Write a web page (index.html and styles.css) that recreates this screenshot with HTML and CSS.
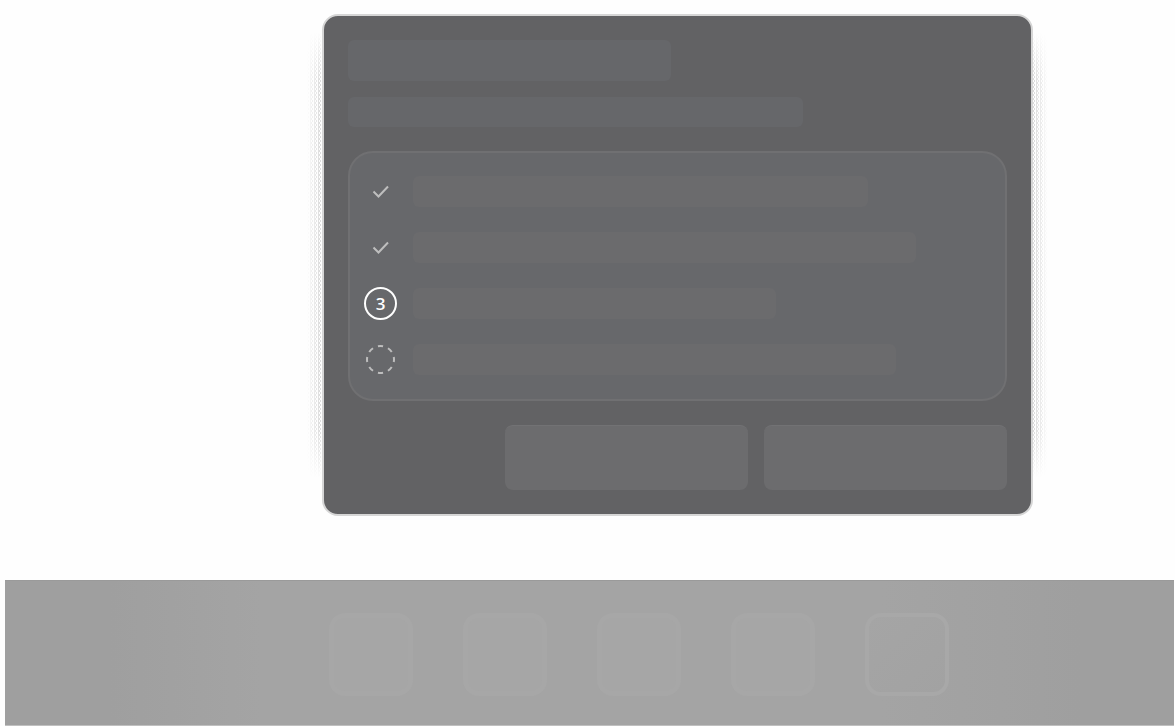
FILE: index.html
```html
<!DOCTYPE html>
<html lang="en">
<head>
<meta charset="utf-8">
<meta name="viewport" content="width=device-width, initial-scale=1">
<title>Setup steps</title>
<link rel="stylesheet" href="styles.css">
</head>
<body>
<main class="stage">
  <section class="card">
    <div class="bar bar-title"></div>
    <div class="bar bar-subtitle"></div>
    <ol class="steps">
      <li class="step">
        <svg class="mark" viewBox="0 0 33 33" aria-label="Done"><path d="M9.5 16.5l5 5L24 11.500" fill="none" stroke="#bebebe" stroke-width="2"/></svg>
        <span class="line line-1"></span>
      </li>
      <li class="step">
        <svg class="mark" viewBox="0 0 33 33" aria-label="Done"><path d="M9.500 16.500l5 5L24 11.500" fill="none" stroke="#bebebe" stroke-width="2"/></svg>
        <span class="line line-2"></span>
      </li>
      <li class="step">
        <span class="mark number">3</span>
        <span class="line line-3"></span>
      </li>
      <li class="step">
        <svg class="mark" viewBox="0 0 33 33" aria-label="Pending"><circle cx="16.500" cy="16.500" r="13.500" fill="none" stroke="#bebebe" stroke-width="2" pathLength="80" stroke-dasharray="5 5" stroke-dashoffset="2.500"/></svg>
        <span class="line line-4"></span>
      </li>
    </ol>
    <div class="actions">
      <button class="action" type="button" aria-label="Back"></button>
      <button class="action" type="button" aria-label="Next"></button>
    </div>
  </section>
</main>
<nav class="dock" aria-label="Dock">
  <button class="tile" type="button" aria-label="App 1"></button>
  <button class="tile" type="button" aria-label="App 2"></button>
  <button class="tile" type="button" aria-label="App 3"></button>
  <button class="tile" type="button" aria-label="App 4"></button>
  <button class="tile tile-outline" type="button" aria-label="App 5"></button>
</nav>
</body>
</html>
```
FILE: styles.css
```css
* {
  box-sizing: border-box;
}

body {
  margin: 0;
  background: #fefefe;
  font-family: "Open Sans", "Noto Sans", sans-serif;
}

.stage {
  padding: 14px 142px 64px 322px;
}

.card {
  position: relative;
  padding: 24px;
  border: 2px solid #d6d6d6;
  border-radius: 16px;
  background: #626264;
}

/* Stippled shade along both sides of the card */
.card::before,
.card::after {
  content: "";
  position: absolute;
  top: 16px;
  bottom: 36px;
  width: 15px;
  background:
    conic-gradient(#d8d8d8 25%, transparent 0) 0 0 / 2px 4px,
    conic-gradient(#d8d8d8 25%, transparent 0) 1px 2px / 4px 4px;
  mask:
    linear-gradient(transparent, #000 48px, #000 calc(100% - 48px), transparent),
    linear-gradient(var(--fade), #000, transparent);
  mask-composite: intersect;
}

.card::before {
  --fade: to left;
  right: 100%;
  margin-right: 2px;
}

.card::after {
  --fade: to right;
  left: 100%;
  margin-left: 2px;
}

.bar {
  border-radius: 6px;
  background: #66676a;
}

.bar-title {
  width: 49%;
  height: 41px;
  margin-bottom: 16px;
}

.bar-subtitle {
  width: 69%;
  height: 30px;
  margin-bottom: 24px;
}

.steps {
  display: grid;
  gap: 23px;
  margin: 0 0 24px;
  padding: 22px 14px 23px;
  border: 2px solid #707072;
  border-radius: 25px;
  background: #67686b;
  list-style: none;
}

.step {
  display: flex;
  align-items: center;
  gap: 16px;
}

.mark {
  flex: none;
  width: 33px;
  height: 33px;
}

.number {
  display: flex;
  align-items: center;
  justify-content: center;
  border: 2px solid #fefefe;
  border-radius: 50%;
  color: #fefefe;
  font-size: 17px;
  font-weight: 600;
  line-height: 20px;
}

.line {
  height: 31px;
  border-radius: 6px;
  background: #6b6b6d;
}

.line-1 {
  width: 455px;
}

.line-2 {
  width: 503px;
}

.line-3 {
  width: 363px;
}

.line-4 {
  width: 483px;
}

.actions {
  display: flex;
  justify-content: flex-end;
  gap: 16px;
}

.action {
  width: 243px;
  height: 65px;
  padding: 0;
  border: 0;
  border-top: 1px solid #727274;
  border-radius: 8px;
  background: #6c6c6e;
}

.dock {
  display: flex;
  justify-content: center;
  gap: 50px;
  margin: 0 1px 0 5px;
  padding: 32px 0 29px 98px;
  border-top: 1px solid #9a9a9a;
  border-bottom: 1px solid #c0c0c0;
  background: linear-gradient(90deg, #9f9f9f 9%, #a4a4a4 22%, #a4a4a4 75%, #9f9f9f 92%);
}

.tile {
  width: 84px;
  height: 83px;
  padding: 0;
  border: 5px solid #a7a7a7;
  border-radius: 16px;
  background: #a6a6a6;
}

.tile-outline {
  border-width: 4px;
  border-color: #a8a8a8;
  background: linear-gradient(135deg, #a5a5a5, #a2a2a2);
}
```
